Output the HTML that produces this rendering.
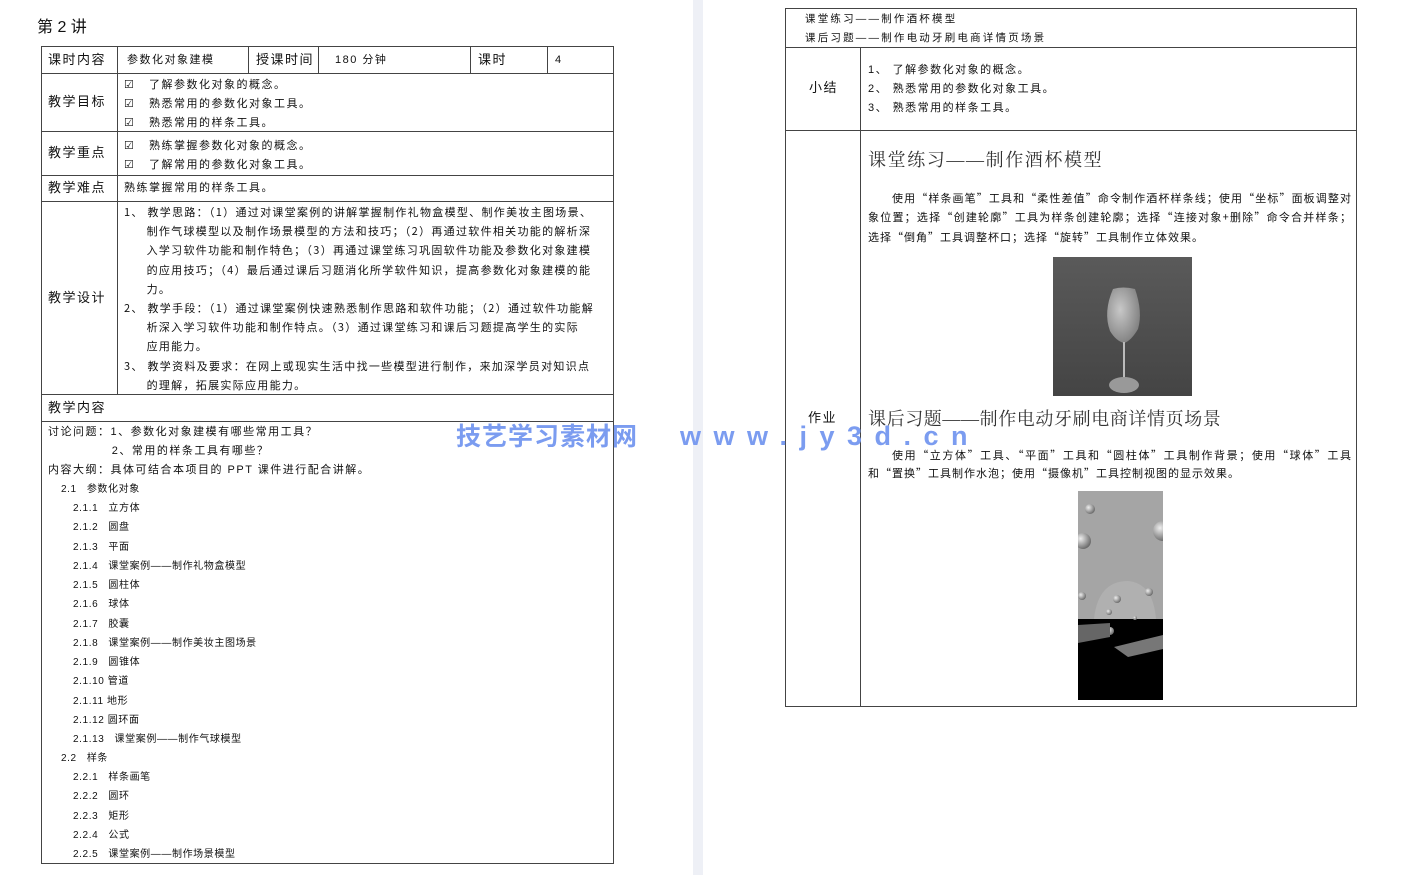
<!DOCTYPE html>
<html><head><meta charset="utf-8"><style>
*{margin:0;padding:0;box-sizing:border-box}
body{width:1426px;height:875px;background:#fff;position:relative;overflow:hidden;font-family:"Liberation Sans","Noto Sans CJK SC",sans-serif;color:#111;line-height:1.2}
.a{position:absolute;white-space:nowrap}
.s{font-size:11px;letter-spacing:1.5px}
.m{font-size:13px;letter-spacing:1.5px}
.cj{font-family:"Noto Sans CJK SC","Liberation Sans",sans-serif}
.hl{position:absolute;height:1px;background:#444}
.vl{position:absolute;width:1px;background:#444}
.serif{font-family:"Liberation Serif","Noto Serif CJK SC",serif}
.l{font-size:10px;letter-spacing:0.6px}
</style></head><body>
<div class="a" style="left:693px;top:0;width:10px;height:875px;background:#eef0f6"></div>

<div class="a" style="left:37px;top:18px;font-size:16px">第 2 讲</div>
<div class="a" style="left:41px;top:46px;width:573px;height:818px;border:1px solid #444"></div>
<div class="hl" style="left:41px;top:73px;width:573px"></div>
<div class="hl" style="left:41px;top:131px;width:573px"></div>
<div class="hl" style="left:41px;top:175px;width:573px"></div>
<div class="hl" style="left:41px;top:201px;width:573px"></div>
<div class="hl" style="left:41px;top:394px;width:573px"></div>
<div class="hl" style="left:41px;top:421px;width:573px"></div>
<div class="vl" style="left:117px;top:46px;height:348px"></div>
<div class="vl" style="left:248px;top:46px;height:27px"></div>
<div class="vl" style="left:318px;top:46px;height:27px"></div>
<div class="vl" style="left:470px;top:46px;height:27px"></div>
<div class="vl" style="left:547px;top:46px;height:27px"></div>

<div class="a m" style="left:48px;top:52px">课时内容</div>
<div class="a s" style="left:127px;top:54px">参数化对象建模</div>
<div class="a m" style="left:256px;top:52px">授课时间</div>
<div class="a s" style="left:335px;top:54px">180 分钟</div>
<div class="a m" style="left:478px;top:52px">课时</div>
<div class="a s" style="left:555px;top:54px">4</div>

<div class="a m" style="left:48px;top:94px">教学目标</div>
<div class="a s" style="left:124px;top:76px;line-height:19.2px">☑ &nbsp; 了解参数化对象的概念。<br>☑ &nbsp; 熟悉常用的参数化对象工具。<br>☑ &nbsp; 熟悉常用的样条工具。</div>
<div class="a m" style="left:48px;top:145px">教学重点</div>
<div class="a s" style="left:124px;top:137px;line-height:19.2px">☑ &nbsp; 熟练掌握参数化对象的概念。<br>☑ &nbsp; 了解常用的参数化对象工具。</div>
<div class="a m" style="left:48px;top:180px">教学难点</div>
<div class="a s" style="left:124px;top:182px">熟练掌握常用的样条工具。</div>
<div class="a m" style="left:48px;top:290px">教学设计</div>
<div class="a s cj" style="left:124px;top:203px;line-height:19.2px;letter-spacing:1.3px">1、 教学思路：（1）通过对课堂案例的讲解掌握制作礼物盒模型、制作美妆主图场景、<br>&nbsp; &nbsp; &nbsp; 制作气球模型以及制作场景模型的方法和技巧；（2）再通过软件相关功能的解析深<br>&nbsp; &nbsp; &nbsp; 入学习软件功能和制作特色；（3）再通过课堂练习巩固软件功能及参数化对象建模<br>&nbsp; &nbsp; &nbsp; 的应用技巧；（4）最后通过课后习题消化所学软件知识，提高参数化对象建模的能<br>&nbsp; &nbsp; &nbsp; 力。<br>2、 教学手段：（1）通过课堂案例快速熟悉制作思路和软件功能；（2）通过软件功能解<br>&nbsp; &nbsp; &nbsp; 析深入学习软件功能和制作特点。（3）通过课堂练习和课后习题提高学生的实际<br>&nbsp; &nbsp; &nbsp; 应用能力。<br>3、 教学资料及要求：在网上或现实生活中找一些模型进行制作，来加深学员对知识点<br>&nbsp; &nbsp; &nbsp; 的理解，拓展实际应用能力。</div>
<div class="a m" style="left:48px;top:400px">教学内容</div>
<div class="a s" style="left:48px;top:423px;line-height:19.2px">讨论问题：1、参数化对象建模有哪些常用工具？<br>&nbsp; &nbsp; &nbsp; &nbsp; &nbsp; &nbsp; &nbsp; 2、常用的样条工具有哪些？<br>内容大纲：具体可结合本项目的 PPT 课件进行配合讲解。</div>
<div class="a l" style="left:61px;top:480px;line-height:19.2px">2.1 &nbsp; 参数化对象</div>
<div class="a l" style="left:73px;top:499px;line-height:19.25px">2.1.1 &nbsp; 立方体<br>2.1.2 &nbsp; 圆盘<br>2.1.3 &nbsp; 平面<br>2.1.4 &nbsp; 课堂案例——制作礼物盒模型<br>2.1.5 &nbsp; 圆柱体<br>2.1.6 &nbsp; 球体<br>2.1.7 &nbsp; 胶囊<br>2.1.8 &nbsp; 课堂案例——制作美妆主图场景<br>2.1.9 &nbsp; 圆锥体<br>2.1.10 管道<br>2.1.11 地形<br>2.1.12 圆环面<br>2.1.13 &nbsp; 课堂案例——制作气球模型</div>
<div class="a l" style="left:61px;top:749px;line-height:19.2px">2.2 &nbsp; 样条</div>
<div class="a l" style="left:73px;top:768px;line-height:19.25px">2.2.1 &nbsp; 样条画笔<br>2.2.2 &nbsp; 圆环<br>2.2.3 &nbsp; 矩形<br>2.2.4 &nbsp; 公式<br>2.2.5 &nbsp; 课堂案例——制作场景模型</div>

<div class="a" style="left:785px;top:8px;width:572px;height:699px;border:1px solid #444"></div>
<div class="hl" style="left:785px;top:47px;width:572px"></div>
<div class="hl" style="left:785px;top:130px;width:572px"></div>
<div class="vl" style="left:860px;top:47px;height:660px"></div>
<div class="a s" style="left:805px;top:10px;line-height:19px;letter-spacing:2.2px;font-size:10.5px">课堂练习——制作酒杯模型<br>课后习题——制作电动牙刷电商详情页场景</div>
<div class="a m" style="left:809px;top:80px">小结</div>
<div class="a s" style="left:868px;top:61px;line-height:19.2px">1、 了解参数化对象的概念。<br>2、 熟悉常用的参数化对象工具。<br>3、 熟悉常用的样条工具。</div>
<div class="a serif" style="left:868px;top:150px;font-size:18px;color:#333;letter-spacing:1.6px">课堂练习——制作酒杯模型</div>
<div class="a s cj" style="left:868px;top:189px;line-height:19.4px;white-space:normal;width:484px;text-indent:24px;letter-spacing:1px;text-align:justify">使用“样条画笔”工具和“柔性差值”命令制作酒杯样条线；使用“坐标”面板调整对象位置；选择“创建轮廓”工具为样条创建轮廓；选择“连接对象+删除”命令合并样条；选择“倒角”工具调整杯口；选择“旋转”工具制作立体效果。</div>
<div class="a" style="left:1053px;top:257px;width:139px;height:139px;background:linear-gradient(#5a5a5a,#444)">
<svg width="139" height="139"><defs><radialGradient id="g" cx="0.4" cy="0.4" r="0.7"><stop offset="0" stop-color="#c8c8c8"/><stop offset="1" stop-color="#7a7a7a"/></radialGradient></defs>
<path d="M60 32 Q70 29 82 32 Q90 55 85 72 Q78 84 71 86 Q63 84 57 74 Q50 55 60 32Z" fill="url(#g)"/>
<rect x="70" y="85" width="2" height="40" fill="#bbb"/>
<ellipse cx="71" cy="128" rx="15" ry="8" fill="#999"/></svg></div>
<div class="a m" style="left:808px;top:410px">作业</div>
<div class="a serif" style="left:868px;top:409px;font-size:18px;color:#333;letter-spacing:0.6px">课后习题——制作电动牙刷电商详情页场景</div>
<div class="a s cj" style="left:868px;top:446px;line-height:18px;white-space:normal;width:484px;text-indent:24px;letter-spacing:1px;text-align:justify">使用“立方体”工具、“平面”工具和“圆柱体”工具制作背景；使用“球体”工具和“置换”工具制作水泡；使用“摄像机”工具控制视图的显示效果。</div>
<div class="a" style="left:1078px;top:491px;width:85px;height:209px;background:#000">
<svg width="85" height="209"><defs><radialGradient id="b" cx="0.35" cy="0.35" r="0.7"><stop offset="0" stop-color="#eee"/><stop offset="1" stop-color="#666"/></radialGradient></defs>
<rect width="85" height="128" fill="#a5a5a5"/><path d="M16 128 Q20 90 50 90 Q75 92 78 128Z" fill="#b0b0b0"/>
<circle cx="12" cy="18" r="5" fill="url(#b)"/><circle cx="5" cy="50" r="8" fill="url(#b)"/><circle cx="85" cy="40" r="10" fill="url(#b)"/><circle cx="4" cy="105" r="4" fill="url(#b)"/><circle cx="39" cy="108" r="4" fill="url(#b)"/><circle cx="71" cy="101" r="4" fill="url(#b)"/><circle cx="31" cy="121" r="3" fill="url(#b)"/><circle cx="57" cy="127" r="2" fill="url(#b)"/><circle cx="32" cy="140" r="4" fill="url(#b)"/>
<path d="M0 134 L32 132 L32 146 L0 152Z" fill="#666"/><path d="M36 156 L85 144 L85 158 L50 166Z" fill="#777"/></svg></div>

<div class="a" style="left:456px;top:422px;font-size:25px;font-weight:bold;color:#7b9cf0;letter-spacing:1px">技艺学习素材网</div>
<div class="a" style="left:680px;top:420px;font-size:27px;font-weight:bold;color:#7b9cf0;letter-spacing:12.5px">www.jy3d.cn</div>
</body></html>
